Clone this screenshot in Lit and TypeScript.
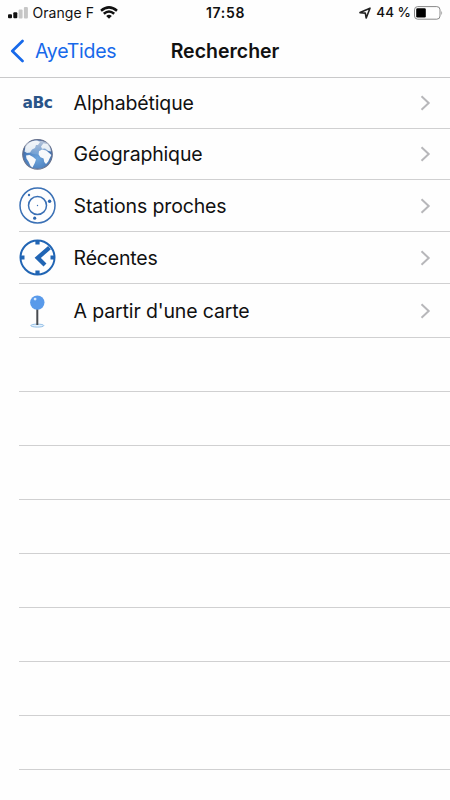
import { LitElement, html, css, svg } from "lit";
import { customElement } from "lit/decorators.js";
import { styleMap } from "lit/directives/style-map.js";

const clockIcon = svg`
  <circle cx="18.5" cy="18.5" r="17" fill="none" stroke="#2165b4" stroke-width="2"/>
  <path d="M18.5 1.5V5.5M18.5 31.5V35.5M1.5 18.5H5.5M31.5 18.5H35.5" stroke="#2165b4" stroke-width="4.2"/>
  <path d="M30.5 8.7L18.7 18.8L26 26" fill="none" stroke="#2165b4" stroke-width="4.2"/>`;

const radarIcon = svg`
  <circle cx="18.5" cy="18.5" r="17.5" fill="none" stroke="#3a70b5" stroke-width="1.5"/>
  <circle cx="18.5" cy="18.5" r="9" fill="none" stroke="#3a70b5" stroke-width="1.5"/>
  <circle cx="18.5" cy="18.5" r=".7" fill="#3a70b5"/>
  <circle cx="10" cy="8" r="1.2" fill="#3a70b5"/>
  <circle cx="30.6" cy="14.2" r="1.7" fill="#2d66ae"/>
  <circle cx="15.7" cy="31.2" r="1.6" fill="#2d66ae"/>`;

const globeIcon = svg`
  <defs>
    <radialGradient id="sea" cx="50%" cy="65%" r="66%">
      <stop offset="0" stop-color="#6ea6dd"/><stop offset=".6" stop-color="#4c7fbd"/><stop offset="1" stop-color="#3a5c94"/>
    </radialGradient>
    <linearGradient id="shine" x1="0" y1="0" x2="0" y2="1">
      <stop offset="0" stop-color="#fff" stop-opacity=".65"/><stop offset="1" stop-color="#fff" stop-opacity=".12"/>
    </linearGradient>
  </defs>
  <circle cx="18.5" cy="18.3" r="14.8" fill="url(#sea)" stroke="#67718c" stroke-width="1.1"/>
  <path d="M6.5 11C9 7 13 4.5 18 4.6L21 6L19 9L17 9L16 12L13 13.5L11 16.5L8 17L5.5 15.5Z" fill="#dce6f1"/>
  <path d="M7 19.5L10.5 19L14 21L17 23.5L15.8 27L13.5 31.5L11.5 30L9.5 25.5L7.5 22.5Z" fill="#f7f9fb"/>
  <path d="M20 15.3L23 13.6L27 14.4L29 16L32.4 19L30.8 22L29.2 25.5L27 28L25.2 26L24.6 22.5L21.5 21.2L19.6 18.6Z" fill="#f7f9fb"/>
  <path d="M22 10.6L24.5 7.2L28.5 8L31.5 12.5L32 15.5L29.5 15L26 12.5L23 12.8Z" fill="#dce6f1"/>
  <ellipse cx="18.5" cy="11.5" rx="12.6" ry="7" fill="url(#shine)"/>`;

const pinIcon = svg`
  <ellipse cx="18.3" cy="33.6" rx="6.5" ry="1.5" fill="#e5f1fb" stroke="#8abae5" stroke-width=".9"/>
  <path d="M18.3 16V33" stroke="#484b50" stroke-width="2"/>
  <circle cx="18.3" cy="10.6" r="7.2" fill="#599aea"/>
  <circle cx="16.1" cy="7.1" r="1.4" fill="#d6e9ff"/>`;

const rows = [
  { label: "Alphabétique", icon: null, height: 51, spacing: -0.14 },
  { label: "Géographique", icon: globeIcon, height: 51, spacing: -0.17 },
  { label: "Stations proches", icon: radarIcon, height: 52, spacing: -0.13 },
  { label: "Récentes", icon: clockIcon, height: 52, spacing: -0.18 },
  { label: "A partir d'une carte", icon: pinIcon, height: 54, spacing: -0.14 },
];

@customElement("app-root")
export class AppRoot extends LitElement {
  static styles = css`
    :host { display: block; width: 450px; height: 800px; overflow: hidden; background: #fefefe; color: #111; font-family: Inter, "Liberation Sans", sans-serif; }
    * { box-sizing: border-box; }
    svg { display: block; flex: none; }
    .status { display: grid; grid-template-columns: 1fr auto 1fr; height: 25px; padding: 0 7px 0 8px; align-items: center; font-size: 13.5px; line-height: 25px; }
    .side { display: flex; align-items: center; }
    .right { justify-content: flex-end; font-weight: 500; }
    .carrier { margin: 0 6px 0 4.5px; font-size: 14px; letter-spacing: .05px; }
    .time { font-weight: 600; font-size: 14px; letter-spacing: .7px; }
    .pct { margin: 0 3px 0 5px; }
    .nav { display: grid; grid-template-columns: 1fr auto 1fr; align-items: center; height: 53px; padding: 0 10px 1px; border-bottom: 1px solid #c9c9ca; }
    .back { display: flex; align-items: center; gap: 11px; color: #1769ea; font-size: 19.5px; letter-spacing: -.27px; }
    h1 { margin: 0; font-size: 19.5px; font-weight: 600; letter-spacing: 0; }
    .row { display: flex; align-items: center; margin-left: 19px; padding-right: 19px; border-bottom: 1px solid #d0d0d1; }
    .icon { width: 37px; flex: none; display: flex; justify-content: center; }
    .abc { font-family: "DejaVu Sans", sans-serif; font-weight: 700; font-size: 15.5px; line-height: 20px; letter-spacing: -.5px; color: #2a5488; }
    .label { flex: 1; margin-left: 17.6px; font-size: 19.5px; white-space: nowrap; }
    .empty { height: 54px; margin-left: 19px; border-bottom: 1px solid #d0d0d1; }
  `;

  render() {
    return html`
      <div class="status">
        <div class="side">
          <svg width="20" height="12" viewBox="0 0 20 12">
            <rect y="7.3" width="4" height="4" rx="1" fill="#111"/><rect x="5.3" y="5.3" width="4" height="6" rx="1" fill="#111"/>
            <rect x="10.6" y="2.4" width="4" height="9" rx="1" fill="#c6c6c6"/><rect x="15.9" width="4" height="11.4" rx="1" fill="#c6c6c6"/>
          </svg>
          <span class="carrier">Orange F</span>
          <svg width="18" height="13" viewBox="0 0 18 13">
            <path d="M1 4.8Q9-2 17 4.8M3.8 7.8Q9 3.2 14.2 7.8" fill="none" stroke="#111" stroke-width="2.5"/>
            <path d="M6.2 10Q9 7.6 11.8 10L9 12.8Z" fill="#111"/>
          </svg>
        </div>
        <span class="time">17:58</span>
        <div class="side right">
          <svg width="12" height="12" viewBox="0 0 12 12"><path d="M1 5.6L11 1.2L7.2 11L6.3 6.1Z" fill="none" stroke="#222" stroke-width="1.6" stroke-linejoin="round"/></svg>
          <span class="pct">44 %</span>
          <svg width="29" height="14" viewBox="0 0 29 14">
            <rect x=".5" y=".6" width="25.5" height="12.6" rx="3.2" fill="none" stroke="#888"/><rect x="2.2" y="2.3" width="9.6" height="9.2" rx="1.3" fill="#000"/>
            <path d="M27.4 4.8Q29 7 27.4 9.2Z" fill="#888"/>
          </svg>
        </div>
      </div>
      <div class="nav">
        <div class="back">
          <svg width="14" height="24" viewBox="0 0 14 24"><path d="M12.5 2L2.3 12L12.5 22" fill="none" stroke="#1769ea" stroke-width="2.7" stroke-linecap="round" stroke-linejoin="round"/></svg>
          <span>AyeTides</span>
        </div>
        <h1>Rechercher</h1>
      </div>
      ${rows.map((r) => html`
        <div class="row" style=${styleMap({ height: `${r.height}px` })}>
          <div class="icon">${r.icon
            ? html`<svg width="37" height="37" viewBox="0 0 37 37">${r.icon}</svg>`
            : html`<span class="abc">aBc</span>`}</div>
          <span class="label" style=${styleMap({ letterSpacing: `${r.spacing}px` })}>${r.label}</span>
          <svg width="11" height="16" viewBox="0 0 11 16"><path d="M1.5 1.3L8.7 8L1.5 14.7" fill="none" stroke="#b7b7ba" stroke-width="2"/></svg>
        </div>`)}
      ${Array.from({ length: 8 }, () => html`<div class="empty"></div>`)}
    `;
  }
}
